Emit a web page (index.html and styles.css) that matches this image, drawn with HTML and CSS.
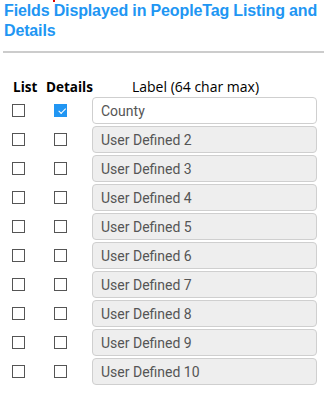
FILE: index.html
```html
<!DOCTYPE html>
<html lang="en">
<head>
    <meta charset="UTF-8">
    <meta name="viewport" content="width=device-width, initial-scale=1.0">
    <title>PeopleTag Fields</title>
    <link rel="stylesheet" href="styles.css">
</head>
<body>

<div class="panel">
    <span class="req-mark"></span>
    <h2 class="title">Fields Displayed in PeopleTag Listing and Details</h2>
    <hr class="divider">

    <div class="field-table">
        <div class="field-row head">
            <span class="col-list">List</span>
            <span class="col-details">Details</span>
            <span class="col-label">Label (64 char max)</span>
        </div>
        <div class="field-row">
            <span class="col-list"><span class="check"></span></span>
            <span class="col-details"><span class="check checked"></span></span>
            <input class="label-input" type="text" value="County">
        </div>
        <div class="field-row">
            <span class="col-list"><span class="check"></span></span>
            <span class="col-details"><span class="check"></span></span>
            <input class="label-input" type="text" value="User Defined 2" disabled>
        </div>
        <div class="field-row">
            <span class="col-list"><span class="check"></span></span>
            <span class="col-details"><span class="check"></span></span>
            <input class="label-input" type="text" value="User Defined 3" disabled>
        </div>
        <div class="field-row">
            <span class="col-list"><span class="check"></span></span>
            <span class="col-details"><span class="check"></span></span>
            <input class="label-input" type="text" value="User Defined 4" disabled>
        </div>
        <div class="field-row">
            <span class="col-list"><span class="check"></span></span>
            <span class="col-details"><span class="check"></span></span>
            <input class="label-input" type="text" value="User Defined 5" disabled>
        </div>
        <div class="field-row">
            <span class="col-list"><span class="check"></span></span>
            <span class="col-details"><span class="check"></span></span>
            <input class="label-input" type="text" value="User Defined 6" disabled>
        </div>
        <div class="field-row">
            <span class="col-list"><span class="check"></span></span>
            <span class="col-details"><span class="check"></span></span>
            <input class="label-input" type="text" value="User Defined 7" disabled>
        </div>
        <div class="field-row">
            <span class="col-list"><span class="check"></span></span>
            <span class="col-details"><span class="check"></span></span>
            <input class="label-input" type="text" value="User Defined 8" disabled>
        </div>
        <div class="field-row">
            <span class="col-list"><span class="check"></span></span>
            <span class="col-details"><span class="check"></span></span>
            <input class="label-input" type="text" value="User Defined 9" disabled>
        </div>
        <div class="field-row">
            <span class="col-list"><span class="check"></span></span>
            <span class="col-details"><span class="check"></span></span>
            <input class="label-input" type="text" value="User Defined 10" disabled>
        </div>
    </div>
</div>

</body>
</html>
```

FILE: styles.css
```css
body {
    font-family: "Liberation Sans", Arial, sans-serif;
    margin: 0;
    padding: 0;
    background-color: white;
}

.panel {
    position: relative;
    padding: 0 2px 0 3px;
}

.req-mark {
    position: absolute;
    top: 0;
    left: 53px;
    width: 2px;
    height: 2px;
    background-color: #e00000;
}

.title {
    margin: 0;
    padding: 1px 0 0 1px;
    font-size: 16px;
    line-height: 20px;
    letter-spacing: -0.14px;
    font-weight: bold;
    color: #2196f3;
}

.divider {
    border: none;
    border-top: 2px solid #cccccc;
    margin: 10px 0 0 0;
}

.field-table {
    margin-top: 25px;
    display: flex;
    flex-direction: column;
    gap: 2px;
}

.field-row {
    display: flex;
    align-items: center;
    height: 27px;
}

.field-row.head {
    height: 17px;
    font-family: "Open Sans", sans-serif;
}

.col-list {
    width: 43px;
    padding-left: 9px;
    box-sizing: border-box;
    display: flex;
    align-items: center;
}

.col-details {
    width: 46px;
    display: flex;
    align-items: center;
    padding-left: 8px;
    box-sizing: border-box;
}

.head .col-list,
.head .col-details {
    font-weight: bold;
    font-size: 13.5px;
    padding-left: 10px;
}

.head .col-details {
    padding-left: 0;
}

.col-label {
    flex: 1;
    padding-right: 25px;
    text-align: center;
    font-size: 14px;
}

.check {
    width: 13px;
    height: 13px;
    border: 1px solid #555555;
    box-sizing: border-box;
    display: block;
    position: relative;
}

.check.checked {
    border-color: #2196f3;
    background-color: #2196f3;
}

.check.checked::after {
    content: "";
    position: absolute;
    left: 3px;
    top: 1px;
    width: 6px;
    height: 3px;
    border-left: 1px solid white;
    border-bottom: 1px solid white;
    transform: rotate(-45deg) translate(-1px, 2px);
}

.label-input {
    width: 225px;
    height: 27px;
    box-sizing: border-box;
    margin-left: 0;
    padding: 0 8px;
    border: 1px solid #cfcfcf;
    border-radius: 4px;
    background-color: white;
    font-family: Roboto, sans-serif;
    font-size: 14px;
    color: #555555;
}

.label-input:disabled {
    background-color: #eeeeee;
    color: #555555;
}
```
